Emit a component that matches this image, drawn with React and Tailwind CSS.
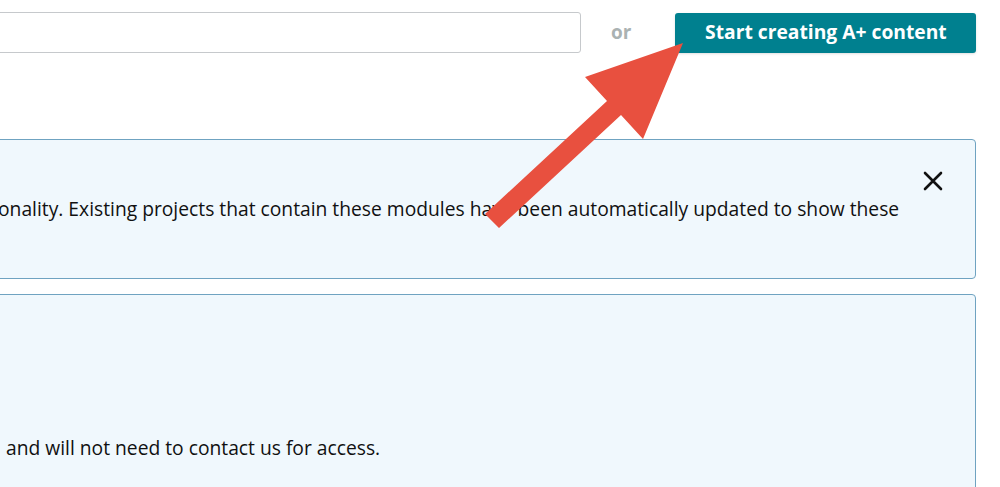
const font = { fontFamily: '"Open Sans", "Noto Sans", Arial, sans-serif' };

function Arrow() {
  return (
    <svg
      className="pointer-events-none absolute left-0 top-0"
      width="1000"
      height="487"
      viewBox="0 0 1000 487"
    >
      <polygon
        points="485,214 607,101 585,77 683,43 643,139 621,115 499,228"
        fill="#e8503f"
      />
    </svg>
  );
}

function CloseIcon() {
  return (
    <svg width="20" height="20" viewBox="0 0 20 20" fill="none" stroke="#111111" strokeWidth="2.6" strokeLinecap="round">
      <path d="M2 2 L18 18 M18 2 L2 18" />
    </svg>
  );
}

export default function App() {
  return (
    <div
      className="relative h-[487px] w-[1000px] overflow-hidden bg-white text-[#111111]"
      style={font}
    >
      {/* Search row */}
      <div className="flex items-center pt-[12px]">
        <div className="ml-[-20px] h-[41px] w-[601px] rounded-[3px] border border-[#c6c9cc] bg-white" />
        <span className="ml-[30px] text-[19px] font-bold text-[#aab2b2]">or</span>
        <button className="ml-[44px] h-[40px] w-[301px] rounded-[3px] bg-[#00808f] text-[19.25px] font-bold text-white shadow-sm">
          Start creating A+ content
        </button>
      </div>

      {/* Notice */}
      <div className="ml-[-20px] mt-[86px] flex h-[140px] w-[996px] rounded-[4px] border border-[#6fa3c1] bg-[#f0f8fd]">
        <div className="flex flex-1 items-center pl-[20px]">
          <p className="ml-[-3px] whitespace-nowrap text-[19.25px]">
            onality. Existing projects that contain these modules have been automatically updated to show these
          </p>
        </div>
        <button className="mr-[32px] mt-[31px] self-start">
          <CloseIcon />
        </button>
      </div>

      {/* Second notice */}
      <div className="ml-[-20px] mt-[15px] h-[220px] w-[996px] rounded-[4px] border border-[#6fa3c1] bg-[#f0f8fd] pl-[25px] pt-[139px]">
        <p className="whitespace-nowrap text-[19.25px]">and will not need to contact us for access.</p>
      </div>

      <Arrow />
    </div>
  );
}
